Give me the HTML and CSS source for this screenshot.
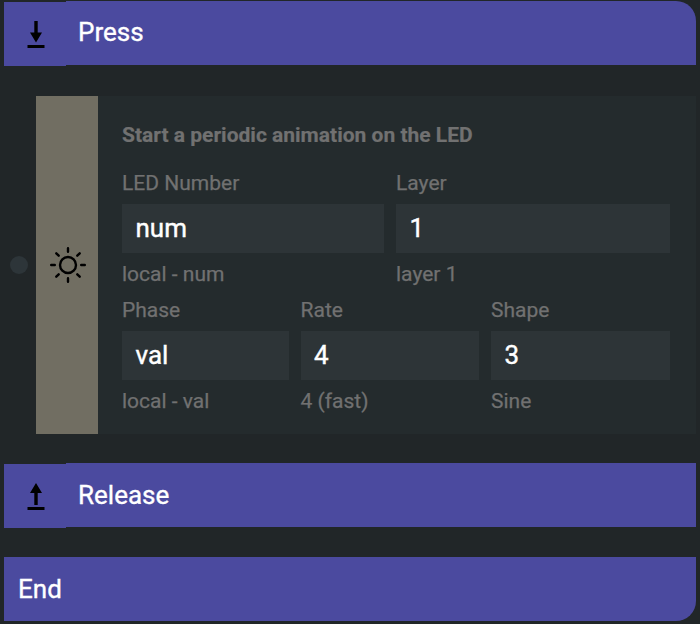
FILE: index.html
```html
<!DOCTYPE html>
<html lang="en">
<head>
<meta charset="utf-8">
<title>Actions</title>
<link rel="stylesheet" href="styles.css">
</head>
<body>
<main class="actions">
  <section class="bar bar-first">
    <div class="bar-icon">
      <svg width="62" height="64" viewBox="0 0 62 64"><path d="M30.3 19h3.400v11.500h4.300L32 40.500 26 30.500h4.300zM23.500 43h17v3h-17z"/></svg>
    </div>
    <h2 class="bar-title">Press</h2>
  </section>
  <section class="block">
    <span class="dot"></span>
    <div class="block-icon">
      <svg width="36" height="36" viewBox="0 0 36 36"><circle cx="18" cy="18" r="8"/><path d="M18 1.200v3.600M18 31.200v3.600M1.200 18h3.600M31.200 18h3.600M6.300 6.300l2.400 2.400M27.300 27.300l2.400 2.400M6.300 29.700l2.400-2.400M27.300 8.700l2.400-2.400"/></svg>
    </div>
    <div class="block-body">
      <h3 class="block-title">Start a periodic animation on the LED</h3>
      <div class="fields fields-two">
        <div class="field"><span class="label">LED Number</span><div class="value">num</div><span class="hint">local - num</span></div>
        <div class="field"><span class="label">Layer</span><div class="value">1</div><span class="hint">layer 1</span></div>
      </div>
      <div class="fields fields-three">
        <div class="field"><span class="label">Phase</span><div class="value">val</div><span class="hint">local - val</span></div>
        <div class="field"><span class="label">Rate</span><div class="value">4</div><span class="hint">4 (fast)</span></div>
        <div class="field"><span class="label">Shape</span><div class="value">3</div><span class="hint">Sine</span></div>
      </div>
    </div>
  </section>
  <section class="bar">
    <div class="bar-icon">
      <svg width="62" height="64" viewBox="0 0 62 64"><path d="M32 19l6 10h-4.300v12h-3.400V29H26zM23.500 43h17v3h-17z"/></svg>
    </div>
    <h2 class="bar-title bar-title-release">Release</h2>
  </section>
  <section class="bar bar-last">
    <h2 class="bar-title bar-title-plain">End</h2>
  </section>
</main>
</body>
</html>
```

FILE: styles.css
```css
* { box-sizing: border-box; }
body {
  margin: 0;
  background: #212628;
  font-family: Roboto, sans-serif;
}
.actions {
  display: flex;
  flex-direction: column;
  height: 624px;
  padding: 1px 4px 0;
}
.bar {
  display: flex;
  height: 64px;
  background: #4b4a9f;
}
.bar-first { border-top-right-radius: 20px; }
.bar-last { margin-top: 30px; border-bottom-right-radius: 20px; }
.bar-icon {
  width: 62px;
  height: 65px;
  border-top: 1px solid #212628;
  background: #4b4a9f;
}
.bar-icon svg { display: block; }
.bar-title {
  margin: 0;
  padding-left: 12px;
  color: #fff;
  font-size: 26px;
  font-weight: 400;
  line-height: 62px;
  -webkit-text-stroke: 0.35px currentColor;
}
.bar-title-release { line-height: 64px; }
.bar-title-plain { padding-left: 14px; line-height: 64px; }
.block {
  display: flex;
  align-items: center;
  height: 338px;
  margin: 31px 0 29px;
}
.dot {
  width: 18px;
  height: 18px;
  margin: 0 8px 0 6px;
  border-radius: 50%;
  background: #2d3539;
}
.block-icon {
  display: flex;
  align-items: center;
  justify-content: center;
  align-self: stretch;
  width: 62px;
  padding-left: 2px;
  background: #716e62;
}
.block-icon svg {
  fill: none;
  stroke: #000;
  stroke-width: 2.4;
  stroke-linecap: round;
}
.block-body {
  flex: 1;
  align-self: stretch;
  padding: 24px 26px 0 24px;
  background: #242b2d;
}
.block-title {
  margin: 0 0 18px;
  color: #717171;
  font-size: 21px;
  font-weight: 700;
  line-height: 30px;
  -webkit-text-stroke: 0.2px currentColor;
}
.fields { display: grid; column-gap: 12px; }
.fields-two { grid-template-columns: 262px 274px; }
.fields-three { grid-template-columns: 166.600px 178.400px 179px; }
.field { display: flex; flex-direction: column; height: 127px; }
.label, .hint {
  color: #717171;
  font-size: 21px;
  line-height: 30px;
  -webkit-text-stroke: 0.25px currentColor;
}
.label { height: 36px; }
.hint { padding-top: 6px; }
.value {
  height: 49px;
  padding-left: 13.500px;
  background: #2d3437;
  color: #fff;
  font-size: 26px;
  line-height: 48px;
  -webkit-text-stroke: 0.4px currentColor;
}
```
